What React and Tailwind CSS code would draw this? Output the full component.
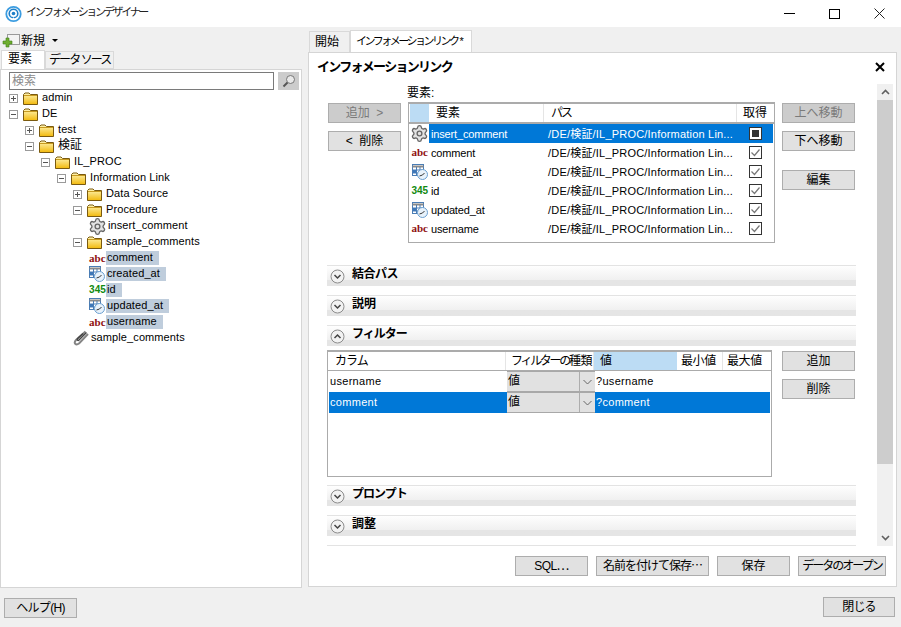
import React from "react";
import { Settings } from "lucide-react";

const FONT = "font-['Liberation_Sans','Noto_Sans_CJK_JP',sans-serif]";

const tree = [
  { depth: 0, label: "admin", toggle: "plus", icon: "folder" },
  { depth: 0, label: "DE", toggle: "minus", icon: "folder" },
  { depth: 1, label: "test", toggle: "plus", icon: "folder" },
  { depth: 1, label: "検証", toggle: "minus", icon: "folder", cjk: true },
  { depth: 2, label: "IL_PROC", toggle: "minus", icon: "folder" },
  { depth: 3, label: "Information Link", toggle: "minus", icon: "folder" },
  { depth: 4, label: "Data Source", toggle: "plus", icon: "folder" },
  { depth: 4, label: "Procedure", toggle: "minus", icon: "folder" },
  { depth: 5, label: "insert_comment", icon: "gear" },
  { depth: 4, label: "sample_comments", toggle: "minus", icon: "folder" },
  { depth: 5, label: "comment", icon: "abc", marked: true },
  { depth: 5, label: "created_at", icon: "date", marked: true },
  { depth: 5, label: "id", icon: "num", marked: true },
  { depth: 5, label: "updated_at", icon: "date", marked: true },
  { depth: 5, label: "username", icon: "abc", marked: true },
  { depth: 4, label: "sample_comments", icon: "clip" },
];

const elements = [
  { name: "insert_comment", icon: "gear", selected: true },
  { name: "comment", icon: "abc" },
  { name: "created_at", icon: "date" },
  { name: "id", icon: "num" },
  { name: "updated_at", icon: "date" },
  { name: "username", icon: "abc" },
];

const Folder = () => (
  <svg width="15" height="13" viewBox="0 0 15 13" className="shrink-0">
    <defs>
      <linearGradient id="fold" x1="0" y1="0" x2="0" y2="1">
        <stop offset="0" stopColor="#fff6b8" />
        <stop offset="1" stopColor="#f2b90c" />
      </linearGradient>
    </defs>
    <path d="M.5 12.500V2.500L2 1h4l1.500 1.500h7v10z" fill="url(#fold)" stroke="#7a5a10" />
    <path d="M1 3.500h13" stroke="#c79a20" />
  </svg>
);

const DateIcon = () => (
  <svg width="16" height="16" viewBox="0 0 16 16" className="shrink-0">
    <rect x=".5" y=".5" width="11" height="11" fill="#fff" stroke="#4a7db5" />
    <path d="M.5 2.500h11" stroke="#8a8a8a" strokeWidth="2" />
    <path d="M4.500 3v8M8 3v8M1 6h10M1 9h10" stroke="#4a7db5" />
    <rect x="1" y="6" width="3" height="3" fill="#3f78b8" />
    <circle cx="10.500" cy="10.500" r="5" fill="#e8f2fb" stroke="#6a9fd0" />
    <path d="M10.500 11l-3 1M10.500 11l2-2" stroke="#333" />
  </svg>
);

const Clip = () => (
  <svg width="16" height="16" viewBox="0 0 16 16" className="shrink-0">
    <path d="M12.500 1.500L3 10c-2.800 3-.2 5.800 3 3.500L15 4" fill="none" stroke="#858585" strokeWidth="2" />
    <path d="M13.500 2.500L6 10c-1 1.200-2.400 0-1.600-1.200L10 3.500" fill="none" stroke="#444" strokeWidth="1.400" />
  </svg>
);

const ItemIcon = ({ kind }) => {
  if (kind === "folder") return <Folder />;
  if (kind === "gear") return <Settings size={19} strokeWidth={1.7} className="shrink-0 -mx-px text-[#666666] fill-[#e2e2e2]" />;
  if (kind === "date") return <DateIcon />;
  if (kind === "clip") return <Clip />;
  if (kind === "abc")
    return <span className="w-4 shrink-0 font-['Liberation_Serif',serif] font-bold text-[11px] leading-none text-[#8f1010]">abc</span>;
  return <span className="w-4 shrink-0 font-['Liberation_Sans',sans-serif] font-bold text-[10px] leading-none text-[#118a11]">345</span>;
};

const Toggle = ({ type }) => (
  <span className="relative w-[9px] h-[9px] shrink-0 border border-[#9a9a9a] bg-white">
    <span className="absolute left-[1px] top-[3px] w-[5px] h-px bg-[#555]" />
    {type === "plus" && <span className="absolute left-[3px] top-[1px] w-px h-[5px] bg-[#555]" />}
  </span>
);

const TreeRow = ({ item }) => {
  const hasToggle = !!item.toggle;
  const left = 8 + item.depth * 16;
  return (
    <div
      className={`flex items-center h-4 whitespace-nowrap ${item.cjk ? "text-[12px]" : "text-[11px] tracking-[0.1px]"}`}
      style={{ paddingLeft: left }}
    >
      {hasToggle && <Toggle type={item.toggle} />}
      <span className={hasToggle ? "ml-[5px] mr-[3px] flex" : "mr-[1px] flex"}>
        <ItemIcon kind={item.icon} />
      </span>
      <span className={item.marked ? "bg-[#bfcddc] h-[14px] leading-[13px] pl-[1px] pr-[6px]" : "px-[1px] leading-[15px] -mt-px"}>{item.label}</span>
    </div>
  );
};

const Btn = ({ label, disabled, className = "w-[73px]" }) => (
  <div
    className={`${className} h-5 shrink-0 flex items-center justify-center border border-[#adadad] text-[12px] leading-none whitespace-nowrap ${
      disabled ? "bg-[#cccccc] text-[#7a7a7a]" : "bg-[#e1e1e1] text-black"
    }`}
  >
    {label}
  </div>
);

const Chevron = ({ open }) => (
  <svg width="15" height="15" viewBox="0 0 15 15" className="shrink-0">
    <circle cx="7.500" cy="7.500" r="6.500" fill="#f2f2f2" stroke="#8c8c8c" />
    <path d={open ? "M4.500 9l3-3 3 3" : "M4.500 6l3 3 3-3"} fill="none" stroke="#444" strokeWidth="1.500" />
  </svg>
);

const Section = ({ title, open, tracking = "" }) => (
  <div className="h-[21px] w-[529px] flex items-center pl-[3px] gap-[7px] border-t border-[#e3e3e3] bg-gradient-to-b from-[#fefefe] via-[#f0f0f0] via-70% to-[#e5e5e5] to-70%">
    <Chevron open={open} />
    <span className={`font-bold text-[12px] leading-none -mt-[5px] ${tracking}`}>{title}</span>
  </div>
);

const Check = ({ on }) =>
  on ? (
    <span className="w-[13px] h-[13px] border border-[#333] bg-white flex items-center justify-center">
      <span className="w-[7px] h-[7px] bg-[#333]" />
    </span>
  ) : (
    <svg width="13" height="13" viewBox="0 0 13 13">
      <rect x=".5" y=".5" width="12" height="12" fill="#fff" stroke="#333" />
      <path d="M2.500 6.500l3 3 5-6" fill="none" stroke="#777" strokeWidth="1.200" />
    </svg>
  );

const ElementsTable = () => (
  <div className="w-[367px] h-[141px] mt-[2px] border border-t-2 border-[#ababab] px-px bg-white overflow-hidden">
    <div className="flex h-[20px] border-b-2 border-[#ababab] -mx-px pl-px pr-px text-[12px] leading-[18px]">
      <div className="w-[19px] bg-[#bcdcf4]" />
      <div className="w-[115px] pl-[7px] border-r border-[#e5e5e5]">要素</div>
      <div className="w-[193px] pl-[7px] border-r border-[#e5e5e5] tracking-[-2px]">パス</div>
      <div className="flex-1 text-center">取得</div>
    </div>
    {elements.map((row) => (
      <div key={row.name} className="flex h-[19px] items-center text-[11px] whitespace-nowrap">
        <div className="w-[19px] flex justify-center shrink-0">
          <ItemIcon kind={row.icon} />
        </div>
        <div className={`flex flex-1 h-full items-center ${row.selected ? "bg-[#0078d7] text-white" : ""}`}>
          <div className="w-[115px] pl-[2px] pt-px tracking-[-0.150px]">{row.name}</div>
          <div className="w-[193px] pl-[4px] pt-px tracking-[0.200px]">/DE/検証/IL_PROC/Information Lin...</div>
          <div className="flex-1 flex justify-center">
            <Check on={row.selected} />
          </div>
        </div>
      </div>
    ))}
  </div>
);

const FilterRow = ({ column, value, selected }) => (
  <div className={`flex h-[21px] text-[11px] leading-[20px] ${selected ? "bg-[#0078d7] text-white" : ""}`}>
    <div className="w-[178px] pl-[1px] tracking-[0.300px]">{column}</div>
    <div className="w-[88px] h-[21px] flex bg-[#e1e1e1] border-y border-[#a8a8a8] text-black text-[12px]">
      <div className="flex-1 pl-[1px] leading-[19px]">値</div>
      <div className="w-4 border-l border-[#adadad] flex items-center justify-center">
        <svg width="9" height="6" viewBox="0 0 9 6">
          <path d="M.5 1l4 4 4-4" fill="none" stroke="#666" />
        </svg>
      </div>
    </div>
    <div className="flex-1 pl-[1px] tracking-[0.300px]">{value}</div>
  </div>
);

const FilterTable = () => (
  <div className="w-[445px] h-[127px] border border-t-2 border-[#ababab] px-px bg-white overflow-hidden">
    <div className="flex h-[19px] border-b border-[#ababab] -mx-px pl-px pr-px text-[12px] leading-[18px] whitespace-nowrap">
      <div className="w-[177px] pl-[6px] border-r border-[#e5e5e5] tracking-[-1px]">カラム</div>
      <div className="w-[88px] pl-[5px] border-r border-[#e5e5e5]">
        <span className="tracking-[-2.300px]">フィルターの</span>
        <span className="tracking-[-0.400px]">種類</span>
      </div>
      <div className="w-[83px] pl-[6px] bg-[#bcdcf4]">値</div>
      <div className="w-[46px] pl-[4px] border-r border-[#e5e5e5] tracking-[-0.400px]">最小値</div>
      <div className="flex-1 pl-[4px] tracking-[-0.400px]">最大値</div>
    </div>
    <FilterRow column="username" value="?username" />
    <FilterRow column="comment" value="?comment" selected />
  </div>
);

const Logo = () => (
  <svg width="17" height="18" viewBox="0 0 17 18" className="shrink-0">
    <circle cx="8.500" cy="9" r="7.200" fill="none" stroke="#3b9ce0" strokeWidth="1.800" />
    <circle cx="8.500" cy="8.500" r="4.300" fill="none" stroke="#1f7fc8" strokeWidth="1.600" />
    <circle cx="8.500" cy="8.500" r="1.800" fill="#1f7fc8" />
    <path d="M7 15l1.500-3 1.500 3z" fill="#fff" />
  </svg>
);

export default function App() {
  return (
    <div className={`${FONT} w-[901px] h-[627px] overflow-hidden flex flex-col bg-[#f0f0f0] text-black text-[12px]`}>
      {/* title bar */}
      <div className="h-[27px] bg-white flex items-center shrink-0">
        <div className="ml-[5px] mr-[4px] flex">
          <Logo />
        </div>
        <span className="text-[11px] tracking-[-2.300px] text-[#222] -mt-[2px]">インフォメーションデザイナー</span>
        <div className="ml-auto flex items-center gap-[34px] mr-[16px]">
          <span className="w-[11px] h-px bg-black" />
          <span className="w-[11px] h-[10px] border border-black" />
          <svg width="11" height="11" viewBox="0 0 11 11">
            <path d="M.5.500l10 10M10.500.500l-10 10" stroke="#222" fill="none" />
          </svg>
        </div>
      </div>

      <div className="flex flex-1 min-h-0">
        {/* left panel */}
        <div className="w-[302px] shrink-0 flex flex-col">
          <div className="h-[23px] flex items-center shrink-0 pt-[4px]">
            <svg width="18" height="14" viewBox="0 0 18 14" className="ml-[2px] shrink-0">
              <rect x="5.500" y=".5" width="12" height="10" fill="#f4f4f4" stroke="#9a9a9a" />
              <path d="M4 4h3v3h3v3H7v3H4v-3H1V7h3z" fill="#6fae2f" stroke="#3f7f1a" strokeWidth=".6" />
            </svg>
            <span className="ml-[1px]">新規</span>
            <span className="ml-[7px] w-0 h-0 border-x-[3px] border-x-transparent border-t-[3px] border-t-black" />
          </div>
          <div className="flex items-end h-[19px] shrink-0 pl-[1px]">
            <div className="w-[44px] h-[19px] bg-white border border-b-0 border-[#d9d9d9] pl-[6px] leading-[17px] text-[12px]">要素</div>
            <div className="w-[69px] h-[18px] bg-[#f0f0f0] border border-[#d9d9d9] pl-[3px] leading-[16px] tracking-[-1.900px] whitespace-nowrap">データ ソース</div>
          </div>
          <div className="flex-1 bg-white border border-[#d5d5d5] min-h-0">
            <div className="flex items-center gap-[4px] pl-[8px] pt-px h-[20px]">
              <div className="w-[265px] h-[18px] border border-[#7a7a7a] bg-white pl-[2px] leading-[16px] text-[#8a8a8a]">検索</div>
              <div className="w-[21px] h-[18px] bg-[#cccccc] flex items-center justify-center">
                <svg width="14" height="14" viewBox="0 0 14 14">
                  <circle cx="8.500" cy="5.500" r="4" fill="#e8e8e8" stroke="#777" />
                  <path d="M5.500 8.500L1.500 12.500" stroke="#555" strokeWidth="2" />
                </svg>
              </div>
            </div>
            {tree.map((item, i) => (
              <TreeRow key={i} item={item} />
            ))}
          </div>
        </div>

        {/* right panel */}
        <div className="flex-1 min-w-0 flex flex-col pl-[6px] pr-[4px]">
          <div className="h-[25px] shrink-0 flex items-end pl-[1px]">
            <div className="w-[41px] h-[21px] bg-[#f0f0f0] border border-b-0 border-[#d9d9d9] pl-[5px] leading-[20px]">開始</div>
            <div className="w-[122px] h-[22px] bg-white border border-b-0 border-[#d9d9d9] pl-[5px] leading-[20px] text-[11px] whitespace-nowrap">
              <span className="tracking-[-2.500px]">インフォメーションリンク</span>
              <span className="ml-[2px]">*</span>
            </div>
          </div>
          <div className="h-[535px] bg-white border border-[#d5d5d5] flex flex-col">
            <div className="h-[31px] pb-[4px] shrink-0 flex items-center pl-[8px] pr-[11px]">
              <span className="font-bold text-[13px] tracking-[-1.700px] whitespace-nowrap">インフォメーションリンク</span>
              <svg width="10" height="10" viewBox="0 0 10 10" className="ml-auto">
                <path d="M1 1l8 8M9 1l-8 8" stroke="#000" strokeWidth="2" />
              </svg>
            </div>
            <div className="h-[462px] flex pl-[18px] shrink-0">
              <div className="w-[529px] shrink-0 h-full border-b border-[#e3e3e3]">
                {/* elements */}
                <div className="h-[16px] pl-[80px] leading-[14px] pt-[2px]">要素:</div>
                <div className="flex h-[145px]">
                  <div className="w-[81px] shrink-0 pl-px flex flex-col gap-2 pt-[3px]">
                    <Btn label={"追加\u00a0\u00a0>"} disabled />
                    <Btn label={"<\u00a0\u00a0削除"} />
                  </div>
                  <ElementsTable />
                  <div className="ml-[7px] flex flex-col pt-[3px]">
                    <Btn label="上へ移動" disabled />
                    <div className="mt-2">
                      <Btn label="下へ移動" />
                    </div>
                    <div className="mt-[19px]">
                      <Btn label="編集" />
                    </div>
                  </div>
                </div>
                <div className="mt-[20px] flex flex-col gap-[9px]">
                  <Section title="結合パス" tracking="tracking-[-0.500px]" />
                  <Section title="説明" />
                  <Section title="フィルター" open tracking="tracking-[-1px]" />
                </div>
                <div className="flex mt-[4px]">
                  <FilterTable />
                  <div className="ml-[10px] flex flex-col gap-2 pt-[1px]">
                    <Btn label="追加" />
                    <Btn label="削除" />
                  </div>
                </div>
                <div className="mt-[8px] flex flex-col gap-[9px]">
                  <Section title="プロンプト" tracking="tracking-[-1px]" />
                  <Section title="調整" />
                </div>
              </div>
              {/* scrollbar */}
              <div className="ml-[21px] w-4 h-full bg-[#f0f0f0] flex flex-col shrink-0">
                <div className="h-4 flex items-center justify-center">
                  <svg width="9" height="6" viewBox="0 0 9 6">
                    <path d="M1 5l3.500-3.500L8 5" fill="none" stroke="#606060" strokeWidth="1.600" />
                  </svg>
                </div>
                <div className="h-[364px] bg-[#cdcdcd]" />
                <div className="mt-auto h-4 flex items-center justify-center">
                  <svg width="9" height="6" viewBox="0 0 9 6">
                    <path d="M1 1l3.500 3.500L8 1" fill="none" stroke="#606060" strokeWidth="1.600" />
                  </svg>
                </div>
              </div>
            </div>
            <div className="flex gap-2 pl-[206px] pt-[10px]">
              <Btn label="SQL⋯" className="w-[73px] tracking-[-0.600px]" />
              <Btn label="名前を付けて保存⋯" className="w-[113px] tracking-[-1px]" />
              <Btn label="保存" />
              <Btn label="データのオープン" className="w-[88px] tracking-[-2px]" />
            </div>
          </div>
        </div>
      </div>

      {/* footer */}
      <div className="h-[39px] shrink-0 flex items-start justify-between pl-[4px] pr-[6px] pt-[10px]">
        <Btn label="ヘルプ(H)" className="w-[73px] tracking-[-0.700px]" />
        <div className="-mt-px">
          <Btn label="閉じる" className="w-[72px] tracking-[-0.800px]" />
        </div>
      </div>
    </div>
  );
}
